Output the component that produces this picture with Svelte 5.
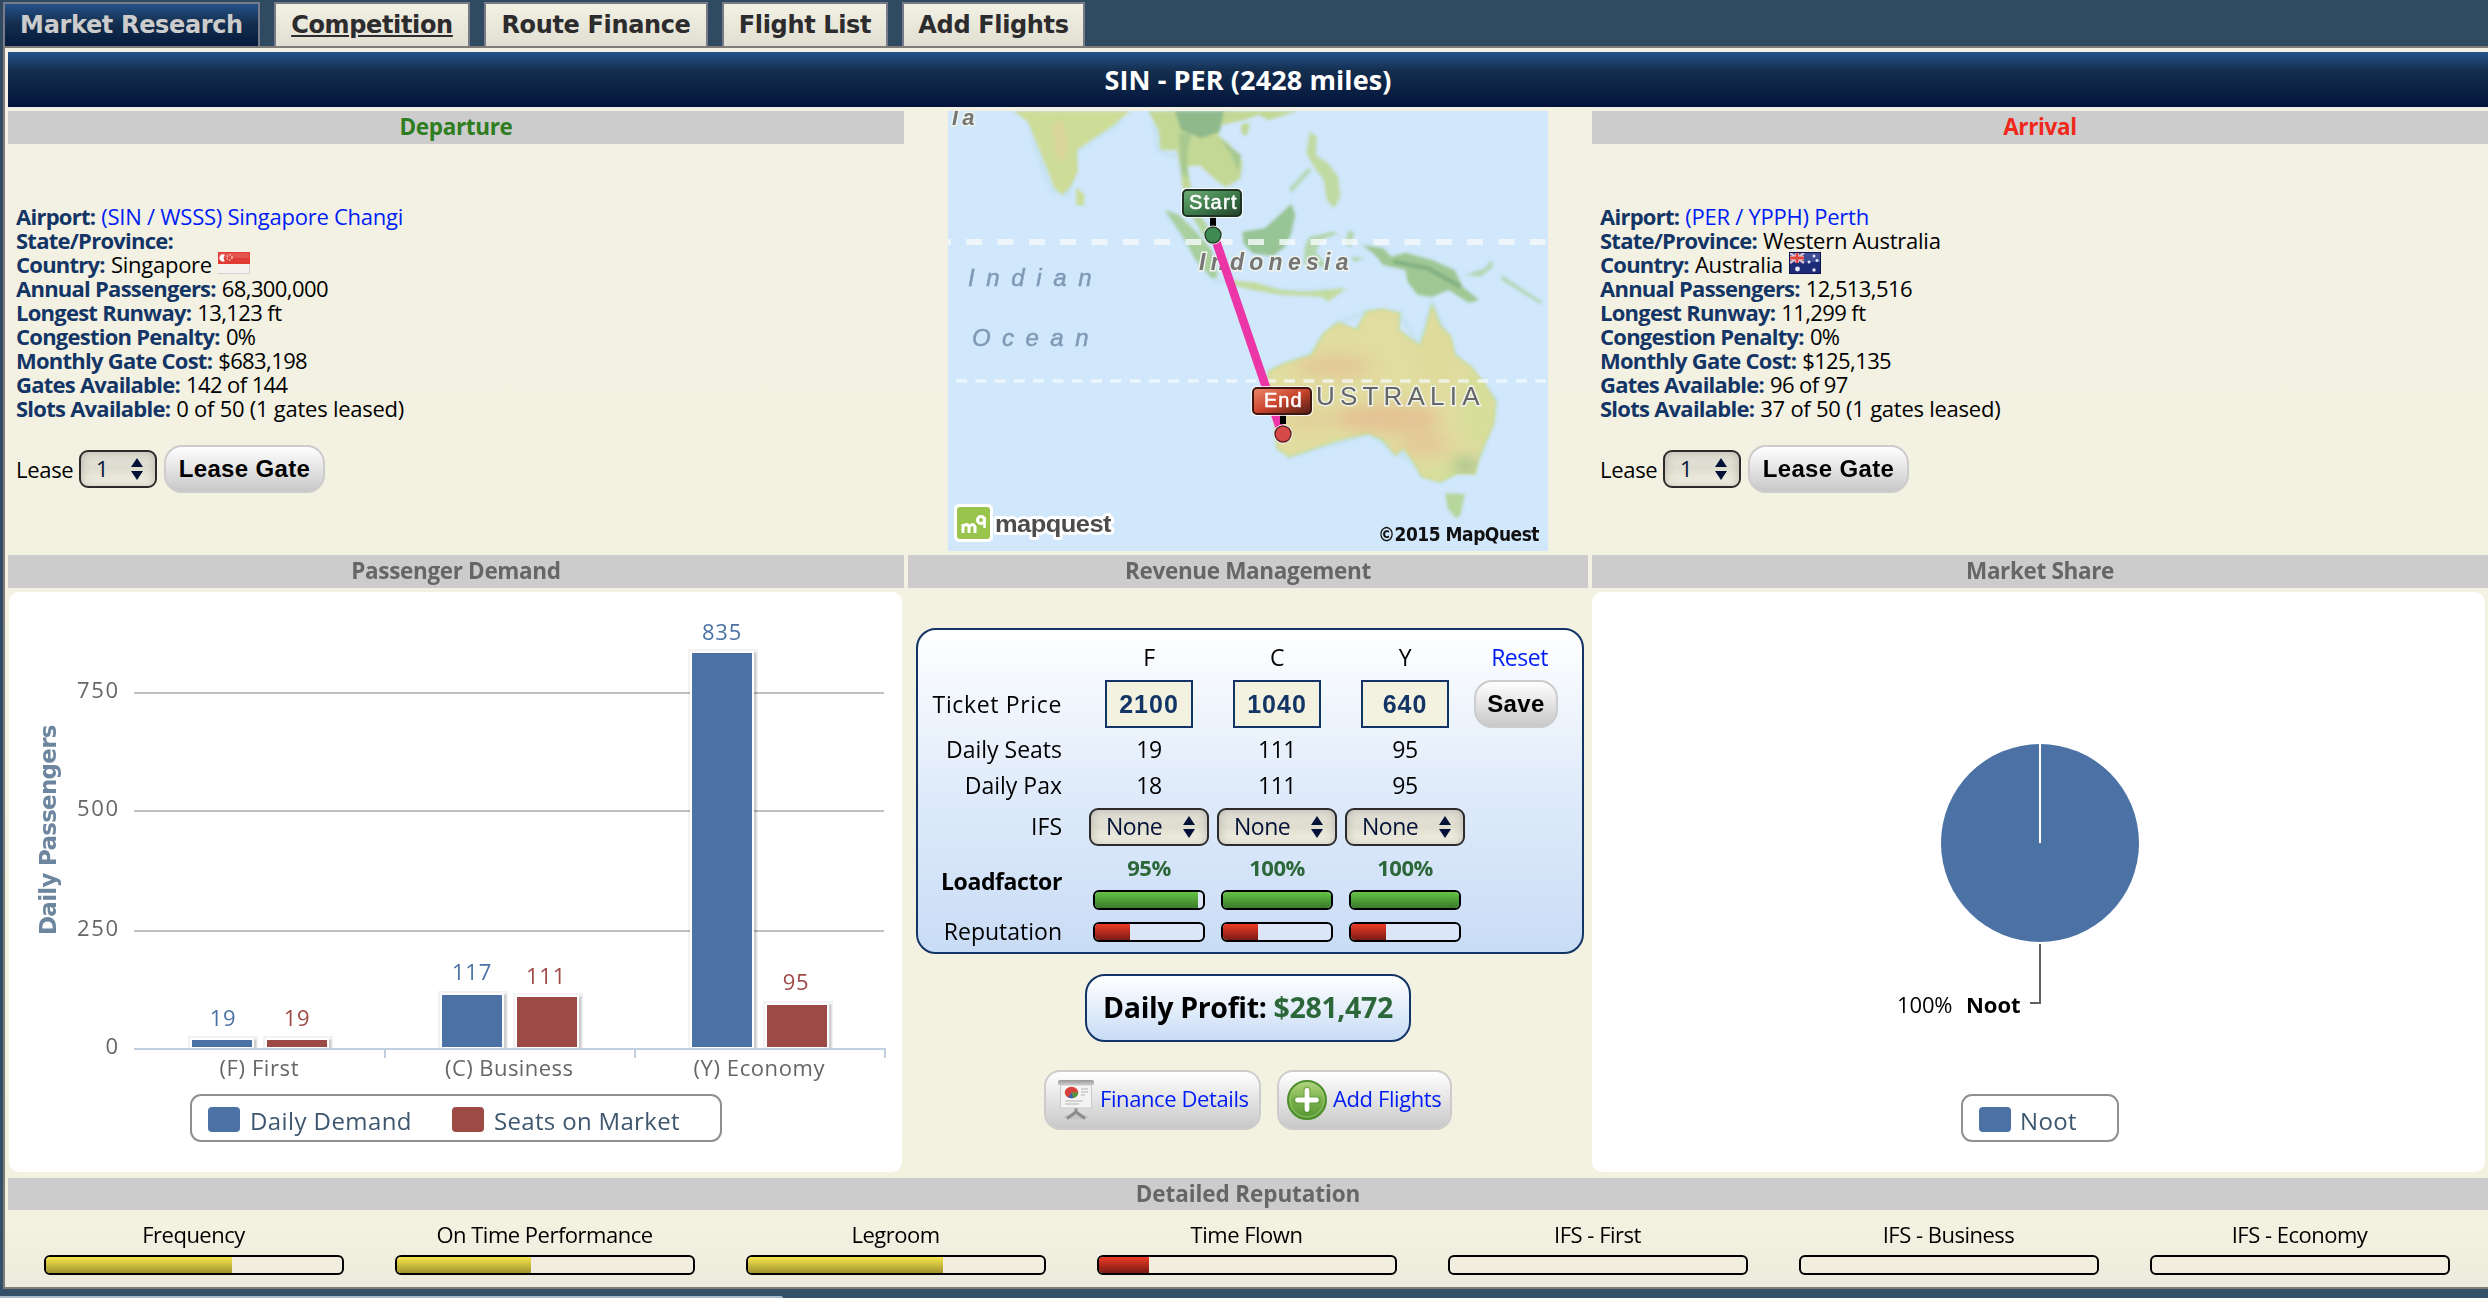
<script>
  const tabs = ['Market Research', 'Competition', 'Route Finance', 'Flight List', 'Add Flights'];

  const departure = {
    title: 'Departure',
    tone: 'green',
    flag: 'sg',
    rows: [
      ['Airport', '(SIN / WSSS) Singapore Changi', 'link'],
      ['State/Province', ''],
      ['Country', 'Singapore', 'flag'],
      ['Annual Passengers', '68,300,000', 'number'],
      ['Longest Runway', '13,123 ft', 'number'],
      ['Congestion Penalty', '0%', 'number'],
      ['Monthly Gate Cost', '$683,198', 'number'],
      ['Gates Available', '142 of 144', 'number'],
      ['Slots Available', '0 of 50 (1 gates leased)']
    ]
  };
  const arrival = {
    title: 'Arrival',
    tone: 'crimson',
    flag: 'au',
    rows: [
      ['Airport', '(PER / YPPH) Perth', 'link'],
      ['State/Province', 'Western Australia'],
      ['Country', 'Australia', 'flag'],
      ['Annual Passengers', '12,513,516', 'number'],
      ['Longest Runway', '11,299 ft', 'number'],
      ['Congestion Penalty', '0%', 'number'],
      ['Monthly Gate Cost', '$125,135', 'number'],
      ['Gates Available', '96 of 97', 'number'],
      ['Slots Available', '37 of 50 (1 gates leased)']
    ]
  };

  const cabins = [
    { code: 'F', price: 2100, seats: 19, pax: 18, load: 95, rep: 32 },
    { code: 'C', price: 1040, seats: 111, pax: 111, load: 100, rep: 32 },
    { code: 'Y', price: 640, seats: 95, pax: 95, load: 100, rep: 32 }
  ];

  const reputation = [
    { name: 'Frequency', value: 63, tone: 'yellow' },
    { name: 'On Time Performance', value: 45.3, tone: 'yellow' },
    { name: 'Legroom', value: 66, tone: 'yellow' },
    { name: 'Time Flown', value: 17, tone: 'red' },
    { name: 'IFS - First', value: 0, tone: 'red' },
    { name: 'IFS - Business', value: 0, tone: 'red' },
    { name: 'IFS - Economy', value: 0, tone: 'red' }
  ];

  // Chart coordinates are relative to the chart panel.
  const gridLines = [
    { label: '750', y: 101 },
    { label: '500', y: 219 },
    { label: '250', y: 339 }
  ];
  const bars = [
    { x: 183, top: 448, value: 19, color: '#4c72a5', cx: 214, base: 434 },
    { x: 258, top: 448, value: 19, color: '#9d4a46', cx: 288, base: 434 },
    { x: 433, top: 403, value: 117, color: '#4c72a5', cx: 463, base: 388 },
    { x: 508, top: 405, value: 111, color: '#9d4a46', cx: 537, base: 392 },
    { x: 683, top: 61, value: 835, color: '#4c72a5', cx: 713, base: 48 },
    { x: 758, top: 413, value: 95, color: '#9d4a46', cx: 787, base: 398 }
  ];
  const categories = [
    { name: '(F) First', x: 250, w: 79 },
    { name: '(C) Business', x: 500, w: 128 },
    { name: '(Y) Economy', x: 750, w: 131 }
  ];
</script>

{#snippet flag(kind)}
  {#if kind === 'sg'}
    <svg class="flag" width="32" height="22" viewBox="0 0 32 22">
      <rect width="32" height="22" fill="#f6f1f1" />
      <rect width="32" height="12" fill="#df3a34" />
      <rect x="1" y="1" width="30" height="5" fill="#ea6a63" opacity=".55" />
      <path d="M7 3a3.6 3.6 0 1 0 0 6a4 4 0 0 1 0-6z" fill="#fff" />
      <circle cx="11.500" cy="5.500" r="2.600" fill="none" stroke="#f7c4c0" stroke-width="1.300" stroke-dasharray="1.600 1.300" />
      <path d="M0 21.500h32M31.500 12v10" stroke="#d9cdd0" />
    </svg>
  {:else}
    <svg class="flag" width="32" height="22" viewBox="0 0 32 22">
      <rect width="32" height="22" fill="#1c2c78" />
      <rect x="1" y="1" width="30" height="9" fill="#5363a6" opacity=".6" />
      <path d="M1 1l14 10M15 1l-14 10" stroke="#d8bfd4" stroke-width="2.500" />
      <path d="M8 1v10M1 6h14" stroke="#f0dfe4" stroke-width="4" />
      <path d="M8 1v10M1 6h14" stroke="#e0473f" stroke-width="2.800" />
      <circle cx="8.500" cy="17" r="2.400" fill="#e4e8f8" />
      <circle cx="25" cy="4" r="1.500" fill="#dfe4f6" />
      <circle cx="20" cy="10" r="1.500" fill="#dfe4f6" />
      <circle cx="28" cy="8.500" r="1.500" fill="#dfe4f6" />
      <circle cx="25" cy="18" r="1.700" fill="#dfe4f6" />
      <rect x=".5" y=".5" width="31" height="21" fill="none" stroke="#0c1550" />
    </svg>
  {/if}
{/snippet}

{#snippet selectBox(value, size)}
  <span class="select {size}">
    <span>{value}</span>
    <svg width="12" height="22" viewBox="0 0 12 22"><path d="M6 0l6 9H0zM6 22l6-9H0z" fill="#04123a" /></svg>
  </span>
{/snippet}

{#snippet meter(value, tone)}
  <span class="meter"><span class="fill {tone}" style:width="{value}%"></span></span>
{/snippet}

{#snippet airport(info)}
  <section class="airport">
    <h2 class="band {info.tone}">{info.title}</h2>
    <div class="details">
      {#each info.rows as [name, value, kind]}
        <div class="row">
          <b>{name}:</b>
          {#if kind === 'link'}<a href="#airport">{value}</a>{:else}<span class={kind}>{value}</span>{/if}
          {#if kind === 'flag'}{@render flag(info.flag)}{/if}
        </div>
      {/each}
      <div class="lease">
        <span>Lease</span>
        {@render selectBox('1', 'small')}
        <button class="btn">Lease Gate</button>
      </div>
    </div>
  </section>
{/snippet}

<div class="page">
  <nav class="tabs">
    {#each tabs as tab, i}
      <div class="tab tab-{i}" class:active={i === 0} class:hover={i === 1}>{tab}</div>
    {/each}
  </nav>

  <main>
    <h1>SIN - PER (2428 miles)</h1>

    <div class="top">
      {@render airport(departure)}

      <div class="map">
        <svg width="600" height="440" viewBox="0 0 600 440">
          <defs>
            <filter id="soft" x="-5%" y="-5%" width="110%" height="110%"><feGaussianBlur stdDeviation="4" /></filter>
            <filter id="patch" x="-50%" y="-50%" width="200%" height="200%"><feGaussianBlur stdDeviation="20" /></filter>
            <linearGradient id="startFill" x1="0" y1="0" x2="1" y2="1"><stop offset="0" stop-color="#6fae78" /><stop offset=".5" stop-color="#3f7d4c" /><stop offset="1" stop-color="#23402a" /></linearGradient>
            <linearGradient id="endFill" x1="0" y1="0" x2="1" y2="1"><stop offset="0" stop-color="#f0896c" /><stop offset=".5" stop-color="#c9452c" /><stop offset="1" stop-color="#4e1c16" /></linearGradient>
            <clipPath id="oz"><path d="M830 815L870 790L935 765L965 700L1000 668L1045 690L1070 635L1110 628L1150 640L1148 690L1200 738L1215 690L1230 615L1250 680L1275 710L1285 765L1325 800L1360 855L1385 905L1380 970L1345 1070L1335 1122L1290 1120L1250 1145L1205 1130L1185 1085L1160 1045L1140 1065L1110 1020L1075 1000L1000 1020L940 1045L880 1070L850 1045L845 960L825 900z" /></clipPath>
          </defs>
          <rect width="600" height="440" fill="#d0e7fc" />
          <g transform="scale(.40816 .33333) translate(-44 -33)">
            <g fill="none" stroke="#c3e2ef" stroke-width="16" filter="url(#soft)" opacity=".7">
              <path d="M245 40L262 150L300 270L335 285L360 150L470 60M550 60L560 150L610 170L625 240M770 200L740 260M580 335L700 540L860 575L1010 570" />
              <path d="M830 815L935 765L1000 668L1070 635L1150 640L1200 738L1230 615L1285 765L1385 905L1345 1070L1250 1145L1185 1085L1075 1000L880 1070z" />
            </g>
            <g filter="url(#soft)">
              <path d="M205 33L240 65L255 110L285 200L305 265L325 285L345 258L362 215L360 150L395 120L450 75L490 33z" fill="#cddc96" />
              <path d="M300 70L325 60L340 130L330 190L308 170z" fill="#dcd29a" opacity=".8" />
              <path d="M358 262L378 285L376 318L358 315z" fill="#cbdc96" />
              <path d="M535 33L560 90L565 150L605 150L615 210L618 265L640 265L630 200L660 195L700 240L725 262L760 235L765 185L735 135L705 105L715 75L770 60L830 33z" fill="#c3d894" />
              <path d="M600 33L720 33L710 95L665 115L615 90z" fill="#8fb98b" />
              <path d="M610 100L640 100L630 160L632 235L615 220zM710 115L762 165L755 215L740 170z" fill="#a7c990" />
              <path d="M785 33L900 33L830 60z" fill="#c3d894" />
              <path d="M762 72L785 70L775 108L763 100z" fill="#c0d895" />
              <path d="M930 95L948 110L945 165L975 190L1000 230L1005 290L990 325L972 300L965 240L940 200L922 160z" fill="#c1d9a2" />
              <path d="M885 280L935 210L925 205L880 265z" fill="#b5d8b5" />
              <path d="M575 330L610 345L655 400L690 450L705 530L690 535L650 480L620 410z" fill="#a9cf9e" />
              <path d="M640 345L665 350L690 400L675 420z" fill="#b5d6a0" />
              <path d="M765 395L820 385L885 312L895 345L885 400L870 440L840 468L790 460L768 430z" fill="#98c595" />
              <path d="M735 540L800 548L860 570L920 575L1020 565L975 605L960 590L860 585L790 570L740 555z" fill="#c2dba0" />
              <path d="M930 410L985 395L1000 400L960 420L945 455L975 500L955 500L935 470L915 500L918 440zM1025 390L1040 400L1030 445L1018 430zM1030 470L1065 475L1040 485z" fill="#b4d6ad" />
              <path d="M1060 435L1110 445L1130 470L1165 458L1230 480L1285 510L1305 560L1345 600L1320 608L1270 570L1230 590L1195 585L1170 545L1165 510L1110 495L1090 465z" fill="#9fc793" />
              <path d="M1135 485L1220 505L1300 560" fill="none" stroke="#7faf80" stroke-width="12" />
              <path d="M1310 525L1360 505L1375 480L1380 500L1350 530zM1400 525L1500 605L1495 612L1400 540z" fill="#b5d6b4" />
              <path d="M830 815L870 790L935 765L965 700L1000 668L1045 690L1070 635L1110 628L1150 640L1148 690L1200 738L1215 690L1230 615L1250 680L1275 710L1285 765L1325 800L1360 855L1385 905L1380 970L1345 1070L1335 1122L1290 1120L1250 1145L1205 1130L1185 1085L1160 1045L1140 1065L1110 1020L1075 1000L1000 1020L940 1045L880 1070L850 1045L845 960L825 900z" fill="#e1dc9f" stroke="#c9dc9d" stroke-width="6" />
              <path d="M1262 1180L1310 1182L1300 1245L1288 1255L1268 1225z" fill="#b6d69c" />
            </g>
            <g clip-path="url(#oz)" filter="url(#patch)" opacity=".75">
              <ellipse cx="990" cy="800" rx="90" ry="34" fill="#e3c296" />
              <ellipse cx="1120" cy="955" rx="130" ry="42" fill="#e5ba92" />
              <ellipse cx="1210" cy="1030" rx="60" ry="40" fill="#e4c496" />
              <ellipse cx="930" cy="960" rx="60" ry="30" fill="#e4cb98" />
              <ellipse cx="1340" cy="930" rx="34" ry="120" fill="#cfdf96" />
              <ellipse cx="1310" cy="1100" rx="30" ry="30" fill="#8dba86" />
              <ellipse cx="1240" cy="760" rx="30" ry="80" fill="#dcda95" />
              <ellipse cx="1250" cy="1120" rx="50" ry="20" fill="#cce098" />
            </g>
          </g>
          <path d="M-13 131H600" stroke="#f5fafc" stroke-width="6" stroke-dasharray="16 15.300" opacity=".8" />
          <path d="M8 270H600" stroke="#f3fafc" stroke-width="3.500" stroke-dasharray="11 8.300" opacity=".75" />
          <g font-family="Liberation Sans, sans-serif" font-size="24">
            <g font-style="italic" fill="#8199b5" stroke="#8199b5" stroke-width=".5">
              <text x="20" y="175" textLength="123">Indian</text>
              <text x="24" y="235" textLength="116">Ocean</text>
            </g>
            <g stroke="#eef3ec" stroke-width="3" paint-order="stroke" fill="#757575">
              <text x="4" y="14" font-style="italic" font-size="22" font-weight="bold" textLength="22">la</text>
              <text x="251" y="159" font-style="italic" font-weight="bold" font-size="23" textLength="149">Indonesia</text>
              <text x="368" y="294" font-size="26" fill="#666" textLength="163">USTRALIA</text>
            </g>
          </g>
          <path d="M268 130L334 323" stroke="#ec35a6" stroke-width="8.500" />
          <path d="M265 106v9M335 304v9" stroke="#000" stroke-width="6" />
          <circle cx="265" cy="124" r="9.500" fill="#fff" />
          <circle cx="265" cy="124" r="8" fill="#3f8a52" stroke="#24452c" stroke-width="1.500" />
          <circle cx="335" cy="323" r="9.500" fill="#fff" />
          <circle cx="335" cy="323" r="8" fill="#d84a48" stroke="#5c2422" stroke-width="1.500" />
          <rect x="233" y="77" width="62" height="30" rx="5" fill="#fff" opacity=".8" />
          <rect x="235" y="79" width="58" height="26" rx="4" fill="url(#startFill)" stroke="#1d3423" stroke-width="2" />
          <rect x="303" y="275" width="62" height="30" rx="5" fill="#fff" opacity=".8" />
          <rect x="305" y="277" width="58" height="26" rx="4" fill="url(#endFill)" stroke="#3f1712" stroke-width="2" />
          <g font-family="Liberation Sans, sans-serif" font-size="20" fill="#fff" stroke="#fff" stroke-width=".5">
            <text x="241" y="98" textLength="47">Start</text>
            <text x="316" y="296" textLength="37">End</text>
          </g>
          <rect x="6" y="393" width="39" height="38" rx="5" fill="#fff" />
          <rect x="9" y="396" width="33" height="32" rx="3" fill="#9ac54c" />
          <path d="M15 422v-9M15 416q4-5 6 0v6M21 416q4-5 6 0v6" fill="none" stroke="#fff" stroke-width="3" />
          <circle cx="33" cy="409" r="3.500" fill="none" stroke="#fff" stroke-width="3" />
          <path d="M36.500 406v11" stroke="#fff" stroke-width="2.500" />
          <text x="47" y="421" font-family="Liberation Sans, sans-serif" font-weight="bold" font-size="24.500" fill="#4c4c4c" stroke="#fff" stroke-width="6" stroke-linejoin="round" paint-order="stroke" textLength="116" lengthAdjust="spacingAndGlyphs">mapquest</text>
          <text x="430" y="430" font-family="DejaVu Sans Condensed, DejaVu Sans, sans-serif" font-weight="bold" font-size="19.500" fill="#111" textLength="161" lengthAdjust="spacingAndGlyphs">©2015 MapQuest</text>
        </svg>
      </div>

      {@render airport(arrival)}
    </div>

    <div class="middle">
      <section>
        <h2 class="band">Passenger Demand</h2>
        <div class="panel">
          <svg width="893" height="580" viewBox="0 0 893 580">
            {#each gridLines as line}
              <path d="M125 {line.y}H875" stroke="#c0c0c0" stroke-width="2" />
              <text class="axis" x="109" y={line.y + 5} text-anchor="end" textLength="41">{line.label}</text>
            {/each}
            <text class="axis" x="109" y="462" text-anchor="end">0</text>
            {#each bars as bar}
              <rect x={bar.x - 1} y={bar.top - 1} width="64" height={456 - bar.top} fill="none" stroke="#000" stroke-opacity=".05" stroke-width="6" />
              <rect x={bar.x + 1} y={bar.top + 1} width="62" height={455 - bar.top} fill="none" stroke="#000" stroke-opacity=".15" stroke-width="3" />
              <rect x={bar.x - 1} y={bar.top - 1} width="62" height={457 - bar.top} fill={bar.color} stroke="#fff" stroke-width="2" />
              <text class="value" x={bar.cx} y={bar.base} text-anchor="middle" fill={bar.color}>{bar.value}</text>
            {/each}
            <path d="M125 457H876V466M376 457V466M626 457V466" fill="none" stroke="#c0d0e0" stroke-width="2" />
            {#each categories as cat}
              <text class="axis" x={cat.x} y="484" text-anchor="middle" textLength={cat.w}>{cat.name}</text>
            {/each}
            <text class="title" transform="translate(47 238) rotate(-90)" text-anchor="middle" textLength="210">Daily Passengers</text>
            <rect x="182" y="503" width="530" height="46" rx="10" fill="#fff" stroke="#909090" stroke-width="2" />
            <rect x="199" y="515" width="32" height="25" rx="4" fill="#4c72a5" />
            <text class="legend" x="241" y="538" textLength="161">Daily Demand</text>
            <rect x="443" y="515" width="32" height="25" rx="4" fill="#9d4a46" />
            <text class="legend" x="485" y="538" textLength="185">Seats on Market</text>
          </svg>
        </div>
      </section>

      <section class="revenue">
        <h2 class="band">Revenue Management</h2>
        <div class="pricing">
          <span></span>
          {#each cabins as c}<span class="text">{c.code}</span>{/each}
          <a href="#reset" class="text">Reset</a>

          <span class="label ticket">Ticket Price</span>
          {#each cabins as c}<span><span class="price">{c.price}</span></span>{/each}
          <button class="btn save">Save</button>

          <span class="label">Daily Seats</span>
          {#each cabins as c}<span class="text">{c.seats}</span>{/each}
          <span></span>

          <span class="label">Daily Pax</span>
          {#each cabins as c}<span class="text">{c.pax}</span>{/each}
          <span></span>

          <span class="label">IFS</span>
          {#each cabins as c}<span>{@render selectBox('None', 'wide')}</span>{/each}
          <span></span>

          <b class="label">Loadfactor</b>
          {#each cabins as c}
            <span class="load"><b>{c.load}%</b>{@render meter(c.load, 'lime')}</span>
          {/each}
          <span></span>

          <span class="label">Reputation</span>
          {#each cabins as c}<span>{@render meter(c.rep, 'red')}</span>{/each}
          <span></span>
        </div>

        <div class="profit">Daily Profit: <span>$281,472</span></div>

        <div class="actions">
          <a href="#finance" class="action finance">
            <svg width="40" height="40" viewBox="0 0 40 40">
              <defs><linearGradient id="pole" x1="0" y1="0" x2="0" y2="1"><stop offset="0" stop-color="#999" /><stop offset="1" stop-color="#cfcfcf" /></linearGradient></defs>
              <ellipse cx="20" cy="37" rx="12" ry="2.500" fill="#c4c4c4" />
              <path d="M20 27v5L11 38.500M20 32l9 6.500" fill="none" stroke="#8b8b8b" stroke-width="3" />
              <rect x="4.500" y="3" width="31" height="25" fill="#f4f4f4" stroke="#c9c9c9" />
              <rect x="2" y="0" width="36" height="5.500" rx="2" fill="url(#pole)" />
              <ellipse cx="15.500" cy="12.500" rx="6.700" ry="5.700" fill="#d9423c" />
              <path d="M15.500 12.500h6.700a6.700 5.700 0 0 1-5 5.500z" fill="#4f9a3c" />
              <path d="M15.500 12.500l1.700 5.500a6.700 5.700 0 0 1-5-.6z" fill="#3a63b4" />
              <path d="M25 9h7M25 12h7M25 15h4M9 21h18M9 24h14" stroke="#d3d3d3" stroke-width="2" />
            </svg>
            <span>Finance Details</span>
          </a>
          <a href="#add" class="action add">
            <svg width="40" height="40" viewBox="0 0 40 40">
              <defs><linearGradient id="plus" x1="0" y1="0" x2="0" y2="1"><stop offset="0" stop-color="#b5d77f" /><stop offset=".5" stop-color="#7ab04b" /><stop offset="1" stop-color="#559834" /></linearGradient></defs>
              <circle cx="20" cy="20" r="19" fill="url(#plus)" stroke="#4e8f2d" stroke-width="2" />
              <circle cx="20" cy="20" r="17" fill="none" stroke="#a9cf7d" stroke-width="1" opacity=".7" />
              <path d="M20 10v20M10 20h20" stroke="#4f8a30" stroke-width="7" stroke-linecap="round" opacity=".45" />
              <path d="M20 10.500v19M10.500 20h19" stroke="#fff" stroke-width="4.800" stroke-linecap="round" />
            </svg>
            <span>Add Flights</span>
          </a>
        </div>
      </section>

      <section>
        <h2 class="band">Market Share</h2>
        <div class="panel share">
          <svg width="893" height="580" viewBox="0 0 893 580">
            <circle cx="448" cy="251" r="99" fill="#4c72a5" />
            <path d="M448 251V151" stroke="#fff" stroke-width="2" />
            <path d="M448 352V411H438" fill="none" stroke="#606060" stroke-width="2" />
            <text class="slice" x="305" y="421" textLength="55">100%</text>
            <text class="slice strong" x="374" y="421" textLength="54">Noot</text>
            <rect x="370" y="503" width="156" height="46" rx="10" fill="#fff" stroke="#909090" stroke-width="2" />
            <rect x="387" y="515" width="32" height="25" rx="4" fill="#4c72a5" />
            <text class="legend" x="428" y="538" textLength="56">Noot</text>
          </svg>
        </div>
      </section>
    </div>

    <section class="detailed">
      <h2 class="band">Detailed Reputation</h2>
      <div class="scores">
        {#each reputation as item}
          <div class="score">
            <span>{item.name}</span>
            {@render meter(item.value, item.tone)}
          </div>
        {/each}
      </div>
    </section>
  </main>

  <div class="status"></div>
</div>

<style>
  :global(body) {
    margin: 0;
    background: #314d66;
  }
  .page {
    box-sizing: border-box;
    width: 2488px;
    height: 1298px;
    overflow: hidden;
    padding: 2px 0 0 3px;
    display: flex;
    flex-direction: column;
    background: linear-gradient(#304a62, #2f4a63 60%, #345068);
    font-family: 'Open Sans', sans-serif;
    font-size: 22px;
    letter-spacing: -0.5px;
    color: #000;
  }
  a { color: #001df5; text-decoration: none; }
  h1, h2 { margin: 0; }

  .tabs {
    display: flex;
    gap: 14px;
    height: 44px;
  }
  .tab {
    box-sizing: border-box;
    border: 2px solid #777a88;
    border-width: 2px 2px 0;
    background: linear-gradient(#f3f1e3, #e0dfd1);
    color: #2c2b2e;
    font: bold 24px/43px 'DejaVu Sans', sans-serif;
    letter-spacing: -0.35px;
    text-align: center;
    white-space: nowrap;
  }
  .tab.active {
    background: linear-gradient(#25538a, #142f50 45%, #061a3d);
    color: #ccc;
  }
  .tab.hover { text-decoration: underline; }
  .tab-0 { width: 257px; }
  .tab-1 { width: 196px; }
  .tab-2 { width: 224px; }
  .tab-3 { width: 166px; }
  .tab-4 { width: 183px; }

  main {
    box-sizing: border-box;
    height: 1243px;
    padding: 4px 0 0 3px;
    border: 2px solid #807b76;
    border-right: 0;
    background: linear-gradient(#f3f1e3, #f3f1e0 95%, #edebdd);
    display: flex;
    flex-direction: column;
  }
  h1 {
    height: 55px;
    background: linear-gradient(#25538a, #142f50 33%, #03143a);
    color: #fff;
    font: bold 27px/55px 'Open Sans', sans-serif;
    letter-spacing: 0.1px;
    text-align: center;
  }
  .band {
    height: 33px;
    background: #ccc;
    color: #666;
    font: bold 22.5px/32px 'Open Sans', sans-serif;
    letter-spacing: -0.35px;
    text-align: center;
  }
  .band.green { color: #2e7d1e; }
  .band.crimson { color: #f0281c; }

  .top, .middle {
    display: grid;
    grid-template-columns: 896px 680px 896px;
    column-gap: 4px;
    margin-top: 4px;
  }
  .top { height: 440px; }
  .map { display: flex; justify-content: center; }
  .map svg { display: block; }

  .details { padding: 60px 0 0 8px; }
  .row {
    height: 24px;
    line-height: 24px;
    display: flex;
    gap: 6px;
    white-space: nowrap;
    letter-spacing: -0.25px;
  }
  .row b { color: #133566; font-weight: 700; letter-spacing: -0.75px; }
  .row .number { letter-spacing: -0.6px; }
  .flag { display: block; }
  .lease {
    display: flex;
    align-items: center;
    height: 48px;
    margin-top: 25px;
    letter-spacing: -0.3px;
  }
  .lease > span:first-child { width: 63px; }
  .btn {
    box-sizing: border-box;
    padding: 0;
    border: 2px solid #ccc;
    border-radius: 18px;
    background: linear-gradient(#fff, #c8c8c8);
    color: #000;
    font: bold 24px 'Liberation Sans', sans-serif;
    letter-spacing: 0.35px;
    width: 161px;
    height: 48px;
  }
  .select {
    box-sizing: border-box;
    display: flex;
    align-items: center;
    justify-content: space-between;
    height: 38px;
    border: 2px solid #2b2b2b;
    border-radius: 9px;
    background: linear-gradient(#e2e0d6, #dfddcf 50%, #f6f4e6);
    box-shadow: inset 0 0 8px rgba(80, 80, 70, 0.3);
    color: #04123a;
  }
  .select span { padding-bottom: 2px; }
  .select.small { width: 78px; padding: 0 12px 0 15px; margin-right: 7px; }
  .select.wide { width: 120px; padding: 0 12px 0 15px; }

  .panel {
    width: 893px;
    height: 580px;
    margin: 4px 0 0 1px;
    border-radius: 10px;
    background: #fff;
  }
  .panel.share { margin-left: 0; }
  .panel svg { display: block; }
  .axis { font: 22px 'Open Sans', sans-serif; letter-spacing: 0; fill: #666; }
  .value { font: 22px 'Open Sans', sans-serif; letter-spacing: 0.7px; }
  .title { font: bold 23px 'DejaVu Sans', sans-serif; fill: #6d869f; }
  .legend { font: 24px 'Open Sans', sans-serif; fill: #3e576f; }
  .slice { font: 22px 'Open Sans', sans-serif; fill: #000; }
  .slice.strong { font-weight: bold; }

  .revenue {
    display: flex;
    flex-direction: column;
    align-items: center;
  }
  .revenue .band { align-self: stretch; }
  .pricing {
    box-sizing: border-box;
    width: 668px;
    height: 326px;
    margin: 40px 0 0 4px;
    padding-top: 6px;
    border: 2px solid #133566;
    border-radius: 20px;
    background: linear-gradient(#fff, #dfebfa 50%, #c9dcf6);
    display: grid;
    grid-template-columns: 167px 128px 128px 128px 101px;
    grid-template-rows: 44px 52px 36px 36px 46px 64px 36px;
    font-size: 23px;
  }
  .pricing > * {
    display: flex;
    align-items: center;
    justify-content: center;
  }
  .pricing > .text { padding-bottom: 2px; }
  .pricing > .label {
    justify-content: flex-end;
    padding: 0 23px 2px 0;
    letter-spacing: 0;
  }
  .pricing > .ticket { padding-bottom: 5px; letter-spacing: 0.65px; }
  .pricing > b.label { font-weight: 700; letter-spacing: -0.4px; }
  .price {
    box-sizing: border-box;
    width: 88px;
    height: 48px;
    margin-bottom: 4px;
    border: 2px solid #133566;
    background: #f3f1e0;
    color: #133566;
    font: bold 25px/45px 'Liberation Sans', sans-serif;
    letter-spacing: 1px;
    text-align: center;
  }
  .pricing .save { width: 84px; margin-left: 5px; }
  .pricing .load {
    flex-direction: column;
    justify-content: flex-start;
    color: #2c673a;
  }
  .load b { height: 40px; line-height: 35px; font-weight: 700; font-size: 22px; }
  .meter {
    box-sizing: border-box;
    display: block;
    width: 112px;
    height: 20px;
    border: 2px solid #000;
    border-radius: 6px;
    overflow: hidden;
    background: rgba(240, 240, 250, 0.45);
  }
  .fill { display: block; height: 100%; }
  .lime { background: linear-gradient(#64c444, #3b7a2c); }
  .red { background: linear-gradient(#ee3a26, #7a1b12); }
  .yellow { background: linear-gradient(#f6e64c, #a1942e); }

  .profit {
    box-sizing: border-box;
    width: 326px;
    height: 68px;
    margin-top: 20px;
    border: 2px solid #133566;
    border-radius: 20px;
    background: linear-gradient(#fff, #c9dcf6);
    font-size: 28.5px;
    font-weight: 700;
    line-height: 63px;
    letter-spacing: -0.35px;
    text-align: center;
    white-space: nowrap;
  }
  .profit span { color: #2c673a; }
  .actions { display: flex; gap: 16px; margin-top: 28px; }
  .action {
    box-sizing: border-box;
    display: flex;
    align-items: center;
    gap: 6px;
    height: 60px;
    border: 2px solid #ccc;
    border-radius: 16px;
    background: linear-gradient(#fff, #c8c8c8);
    white-space: nowrap;
    letter-spacing: -0.4px;
  }
  .action span { padding-bottom: 5px; }
  .finance { width: 217px; padding-left: 10px; gap: 4px; }
  .add { width: 175px; padding-left: 8px; }

  .detailed .band { height: 32px; margin-top: 6px; letter-spacing: -0.1px; }
  .scores {
    display: grid;
    grid-template-columns: repeat(7, 351px);
    padding-left: 10px;
  }
  .score {
    display: flex;
    flex-direction: column;
    align-items: center;
  }
  .score > span:first-child { height: 45px; line-height: 49px; }
  .score .meter { width: 300px; background: #f1eee0; }

  .status {
    width: 783px;
    height: 2px;
    margin: auto 0 0 -3px;
    background: #a9bac8;
    border-top-right-radius: 3px;
  }
</style>
